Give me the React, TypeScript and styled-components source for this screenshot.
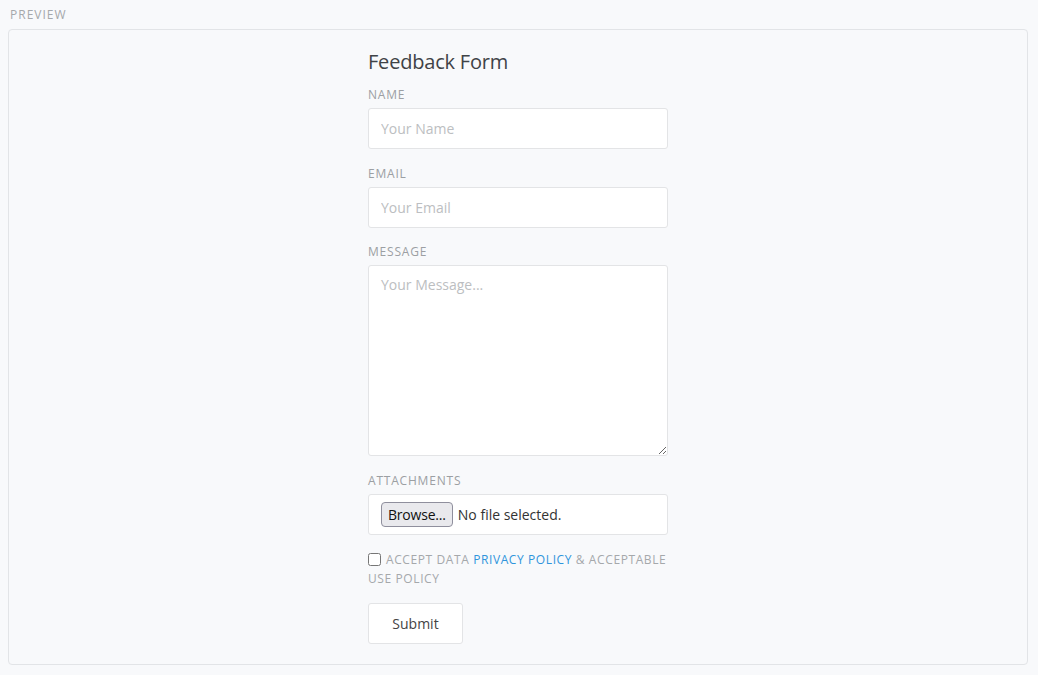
import styled, { createGlobalStyle } from "styled-components";

const GlobalStyle = createGlobalStyle`
  html, body {
    margin: 0;
    padding: 0;
    background: #f8f9fb;
    font-family: "Open Sans", "Noto Sans", sans-serif;
  }
  * {
    box-sizing: border-box;
  }
`;

const Page = styled.div`
  padding: 0 10px 10px 8px;
  height: 675px;
  display: flex;
  flex-direction: column;
`;

const PreviewTitle = styled.div`
  font-size: 12px;
  letter-spacing: 1px;
  color: #a5a8ab;
  line-height: 29px;
  padding-left: 2px;
  height: 29px;
`;

const Panel = styled.div`
  flex: 1;
  border: 1px solid #e2e4e7;
  border-radius: 4px;
  background: #f8f9fb;
  display: flex;
  justify-content: center;
  padding-top: 20px;
`;

const Form = styled.form`
  width: 300px;
  display: flex;
  flex-direction: column;
`;

const Heading = styled.h2`
  margin: 0 0 12px;
  font-size: 20px;
  line-height: 24px;
  font-weight: 400;
  letter-spacing: -0.2px;
  color: #3f4347;
`;

const Field = styled.div<{ $gap?: number }>`
  display: flex;
  flex-direction: column;
  margin-bottom: ${(p) => p.$gap ?? 16}px;
`;

const Label = styled.label`
  font-size: 12px;
  line-height: 16px;
  letter-spacing: 0.8px;
  text-transform: uppercase;
  color: #9c9fa3;
  padding-top: 1px;
  margin-bottom: 5px;
`;

const Input = styled.input`
  height: 41px;
  border: 1px solid #e3e4e6;
  border-radius: 3px;
  background: #fff;
  padding: 0 12px;
  font: inherit;
  font-size: 14px;
  color: #333;
  outline: none;
  &::placeholder {
    color: #bcbec1;
  }
`;

const TextArea = styled.textarea`
  display: block;
  height: 191px;
  border: 1px solid #e3e4e6;
  border-radius: 3px;
  background: #fff;
  padding: 9px 12px;
  font: inherit;
  font-size: 14px;
  line-height: 20px;
  color: #333;
  outline: none;
  &::placeholder {
    color: #bcbec1;
  }
`;

const FileBox = styled.div`
  height: 41px;
  border: 1px solid #e3e4e6;
  border-radius: 3px;
  background: #fff;
  padding: 0 12px;
  display: flex;
  align-items: center;
  gap: 5px;
  font-size: 14px;
  color: #333;
`;

const BrowseButton = styled.button`
  height: 25px;
  padding: 0 6px;
  border: 1px solid #8f8f9d;
  border-radius: 4px;
  background: #e9e9ed;
  font: inherit;
  font-size: 14px;
  letter-spacing: -0.2px;
  color: #111;
`;

const ConsentRow = styled.label`
  display: block;
  font-size: 12px;
  line-height: 19px;
  letter-spacing: 0.6px;
  text-transform: uppercase;
  color: #a5a8ab;
  margin-top: -1px;
  margin-bottom: 15px;
`;

const Check = styled.input`
  width: 13px;
  height: 13px;
  margin: 0 5px 0 0;
  vertical-align: -2px;
`;

const Link = styled.a`
  color: #2f95dc;
  text-decoration: none;
`;

const SubmitButton = styled.button`
  align-self: flex-start;
  width: 95px;
  height: 41px;
  border: 1px solid #e3e4e6;
  border-radius: 3px;
  background: #fff;
  font: inherit;
  font-size: 14px;
  color: #444;
`;

export default function App() {
  return (
    <>
      <GlobalStyle />
      <Page>
        <PreviewTitle>PREVIEW</PreviewTitle>
        <Panel>
          <Form onSubmit={(e) => e.preventDefault()}>
            <Heading>Feedback Form</Heading>
            <Field>
              <Label>Name</Label>
              <Input placeholder="Your Name" />
            </Field>
            <Field $gap={15}>
              <Label>Email</Label>
              <Input placeholder="Your Email" />
            </Field>
            <Field>
              <Label>Message</Label>
              <TextArea placeholder="Your Message..." />
            </Field>
            <Field>
              <Label>Attachments</Label>
              <FileBox>
                <BrowseButton type="button">Browse...</BrowseButton>
                <span>No file selected.</span>
              </FileBox>
            </Field>
            <ConsentRow>
              <Check type="checkbox" />
              Accept data <Link href="#">Privacy Policy</Link> &amp; acceptable
              use policy
            </ConsentRow>
            <SubmitButton type="submit">Submit</SubmitButton>
          </Form>
        </Panel>
      </Page>
    </>
  );
}
